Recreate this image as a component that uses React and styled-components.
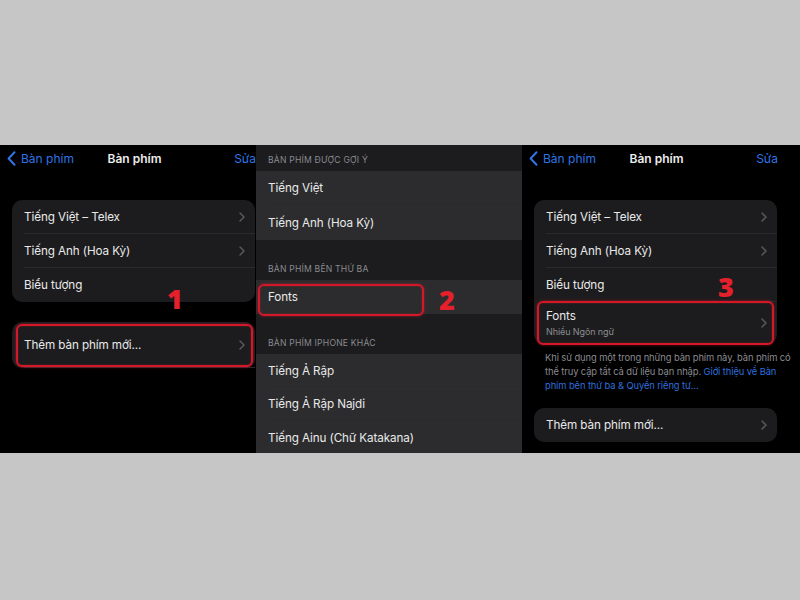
import React from "react";
import styled, { createGlobalStyle } from "styled-components";

const Global = createGlobalStyle`
  html, body { margin: 0; padding: 0; background: #c6c6c6; }
  body { font-family: Inter, "Noto Sans", "Liberation Sans", sans-serif; }
`;

const Page = styled.div`
  width: 800px;
  height: 600px;
  box-sizing: border-box;
  padding-top: 145px;
  background: #c6c6c6;
`;

const Band = styled.div`
  display: grid;
  grid-template-columns: 256px 266px 1fr;
  height: 308px;
  background: #000;
  overflow: hidden;
`;

const Screen = styled.div`
  position: relative;
  overflow: hidden;
  height: 100%;
  background: ${(p) => (p.$list ? "#1c1c1e" : "#000")};
`;

const ScreenInner = styled.div`
  width: 277px;
  display: flex;
  flex-direction: column;
`;

const NavBar = styled.div`
  display: grid;
  grid-template-columns: 1fr auto 1fr;
  align-items: center;
  height: 27px;
  padding: 0 21px 0 7px;
  font-size: 12px;
`;

const BackLink = styled.div`
  display: flex;
  align-items: center;
  gap: 5px;
  color: #2f74e6;
`;

const NavTitle = styled.div`
  color: #ececec;
  font-weight: 600;
  padding-left: 6px;
`;

const NavAction = styled.div`
  justify-self: end;
  color: #2f74e6;
`;

const Card = styled.div`
  position: relative;
  margin: ${(p) => p.$mt || 0}px 22px 0 12px;
  background: #1c1c1e;
  border-radius: 10px;
  display: flex;
  flex-direction: column;
`;

const Row = styled.div`
  position: relative;
  display: flex;
  align-items: center;
  justify-content: space-between;
  height: ${(p) => p.$h || 34}px;
  padding: 0 10px 0 12px;
  box-sizing: border-box;
  color: #e9e9e9;
  font-size: 11.7px;
  letter-spacing: -0.1px;
  &:not(:last-child)::after {
    content: "";
    position: absolute;
    left: ${(p) => (p.$sepLeft != null ? p.$sepLeft : 12)}px;
    right: 0;
    bottom: 0;
    height: 1px;
    background: #2a2a2c;
  }
`;

const RowText = styled.div`
  display: flex;
  flex-direction: column;
  gap: 3px;
`;

const SubText = styled.div`
  font-size: 9px;
  color: #8d8d92;
`;

const Footer = styled.div`
  margin: 7px 2px 0 23px;
  font-size: 9.4px;
  line-height: 14px;
  color: #8a8a8f;
  letter-spacing: -0.1px;
`;

const FooterLink = styled.span`
  color: #2f6fdc;
`;

const ListSection = styled.div`
  display: flex;
  flex-direction: column;
`;

const SectionHeader = styled.div`
  height: ${(p) => p.$h}px;
  display: flex;
  align-items: flex-end;
  padding: 0 12px 6px;
  box-sizing: border-box;
  font-size: 8.6px;
  letter-spacing: 0.2px;
  color: #8a8a8f;
  text-transform: uppercase;
`;

const ListGroup = styled.div`
  background: #2c2c2e;
  display: flex;
  flex-direction: column;
`;

const Highlight = styled.div`
  position: absolute;
  top: ${(p) => p.$t}px;
  left: ${(p) => p.$l}px;
  right: ${(p) => p.$r}px;
  bottom: ${(p) => p.$b}px;
  border: 2.5px solid #d4182a;
  border-radius: 6px;
  box-shadow: 0 0 3px rgba(235, 30, 45, 0.55), inset 0 0 2px rgba(235, 30, 45, 0.4);
  pointer-events: none;
`;

const StepNumber = styled.div`
  position: absolute;
  left: ${(p) => p.$x}px;
  top: ${(p) => p.$y}px;
  font-family: "Open Sans", Inter, sans-serif;
  font-weight: 800;
  font-size: 27px;
  line-height: 20px;
  color: #e3202c;
`;

const Chevron = () => (
  <svg width="6" height="10" viewBox="0 0 6 10">
    <path d="M1 1l4 4-4 4" fill="none" stroke="#5c5c60" strokeWidth="1.4" strokeLinecap="round" strokeLinejoin="round" />
  </svg>
);

const BackChevron = () => (
  <svg width="9" height="15" viewBox="0 0 9 15">
    <path d="M7.5 1.2L1.6 7.5l5.9 6.3" fill="none" stroke="#2f74e6" strokeWidth="2" strokeLinecap="round" strokeLinejoin="round" />
  </svg>
);

const Nav = () => (
  <NavBar>
    <BackLink>
      <BackChevron />
      Bàn phím
    </BackLink>
    <NavTitle>Bàn phím</NavTitle>
    <NavAction>Sửa</NavAction>
  </NavBar>
);

const KeyboardRows = () => (
  <>
    <Row>
      Tiếng Việt – Telex
      <Chevron />
    </Row>
    <Row>
      Tiếng Anh (Hoa Kỳ)
      <Chevron />
    </Row>
  </>
);

export default function App() {
  return (
    <>
      <Global />
      <Page>
        <Band>
          <Screen>
            <ScreenInner>
              <Nav />
              <Card $mt={28}>
                <KeyboardRows />
                <Row>Biểu tượng</Row>
              </Card>
              <Card $mt={20}>
                <Row $h={46}>
                  Thêm bàn phím mới...
                  <Chevron />
                </Row>
                <Highlight $t={2} $l={4} $r={2} $b={1} />
              </Card>
            </ScreenInner>
            <StepNumber $x={167} $y={144}>1</StepNumber>
          </Screen>

          <Screen $list>
            <ListSection>
              <SectionHeader $h={26}>Bàn phím được gợi ý</SectionHeader>
              <ListGroup>
                <Row $sepLeft={12}>Tiếng Việt</Row>
                <Row $h={35}>Tiếng Anh (Hoa Kỳ)</Row>
              </ListGroup>
              <SectionHeader $h={40}>Bàn phím bên thứ ba</SectionHeader>
              <ListGroup>
                <Row>
                  Fonts
                  <Highlight $t={4} $l={2} $r={98} $b={-2} />
                </Row>
              </ListGroup>
              <SectionHeader $h={40}>Bàn phím iPhone khác</SectionHeader>
              <ListGroup>
                <Row $h={33}>Tiếng Ả Rập</Row>
                <Row>Tiếng Ả Rập Najdi</Row>
                <Row>Tiếng Ainu (Chữ Katakana)</Row>
              </ListGroup>
            </ListSection>
            <StepNumber $x={183} $y={145}>2</StepNumber>
          </Screen>

          <Screen>
            <ScreenInner>
              <Nav />
              <Card $mt={28}>
                <KeyboardRows />
                <Row>Biểu tượng</Row>
                <Row $h={42}>
                  <RowText>
                    Fonts
                    <SubText>Nhiều Ngôn ngữ</SubText>
                  </RowText>
                  <Chevron />
                  <Highlight $t={-1} $l={3} $r={3} $b={-1} />
                </Row>
              </Card>
              <Footer>
                Khi sử dụng một trong những bàn phím này, bàn phím có thể truy cập tất cả dữ liệu bạn nhập.{" "}
                <FooterLink>Giới thiệu về Bàn phím bên thứ ba &amp; Quyền riêng tư...</FooterLink>
              </Footer>
              <Card $mt={15}>
                <Row>
                  Thêm bàn phím mới...
                  <Chevron />
                </Row>
              </Card>
            </ScreenInner>
            <StepNumber $x={196} $y={132}>3</StepNumber>
          </Screen>
        </Band>
      </Page>
    </>
  );
}
